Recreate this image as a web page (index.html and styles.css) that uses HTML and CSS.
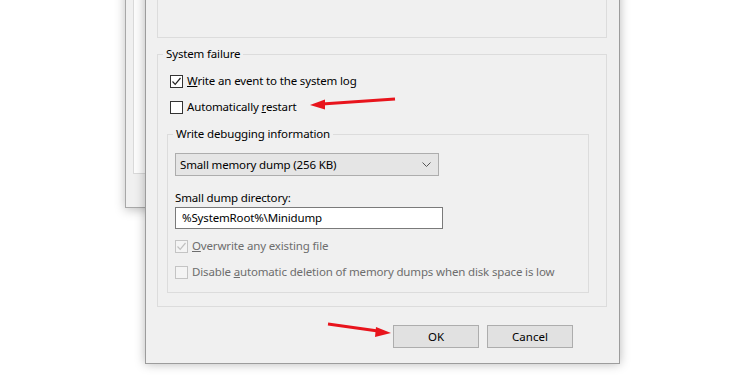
FILE: index.html
```html
<!DOCTYPE html>
<html lang="en">
<head>
    <meta charset="UTF-8">
    <meta name="viewport" content="width=device-width, initial-scale=1.0">
    <title>Startup and Recovery</title>
    <link rel="stylesheet" href="styles.css">
</head>
<body>

<div class="desktop">

    <!-- window behind the dialog -->
    <div class="back-window">
        <div class="back-panel"></div>
    </div>

    <div class="dialog">
        <fieldset class="group top-group"></fieldset>

        <fieldset class="group">
            <legend>System failure</legend>
            <div class="failure-body">
                <label class="check-row">
                    <span class="box"><svg viewBox="0 0 11 11"><polyline points="1.5,5.5 4.2,8.3 9.5,2"/></svg></span>
                    <span><u>W</u>rite an event to the system log</span>
                </label>
                <label class="check-row">
                    <span class="box"></span>
                    <span>Automatically <u>r</u>estart</span>
                </label>

                <fieldset class="group debug">
                    <legend>Write debugging information</legend>
                    <div class="debug-body">
                        <div class="select">
                            <span>Small memory dump (256 KB)</span>
                            <svg class="chevron" viewBox="0 0 9 5"><polyline points="0.5,0.5 4.5,4.5 8.5,0.5"/></svg>
                        </div>
                        <div class="field-label">Small dump directory:</div>
                        <div class="textbox">%SystemRoot%\Minidump</div>
                        <label class="check-row disabled">
                            <span class="box"><svg viewBox="0 0 11 11"><polyline points="1.5,5.5 4.2,8.3 9.5,2"/></svg></span>
                            <span><u>O</u>verwrite any existing file</span>
                        </label>
                        <label class="check-row disabled">
                            <span class="box"></span>
                            <span>Disable <u>a</u>utomatic deletion of memory dumps when disk space is low</span>
                        </label>
                    </div>
                </fieldset>
            </div>
        </fieldset>

        <div class="buttons">
            <button class="btn">OK</button>
            <button class="btn">Cancel</button>
        </div>
    </div>

    <!-- red annotation arrows -->
    <svg class="annotations" viewBox="0 0 750 375">
        <line x1="395" y1="99" x2="322" y2="104"/>
        <polygon points="310,105 325,99.5 325,109.5"/>
        <line x1="328" y1="324" x2="378" y2="331"/>
        <polygon points="391,333 376,327 375,337"/>
    </svg>

</div>

</body>
</html>
```

FILE: styles.css
```css
body { margin: 0; background: #fff; font-family: "Noto Sans", "Open Sans", sans-serif; font-size: 11.5px; letter-spacing: -0.15px; color: #000; overflow: hidden; }
.desktop { position: relative; width: 750px; height: 375px; overflow: hidden; }

.back-window { position: absolute; left: 125px; top: -20px; width: 120px; height: 228px; box-sizing: border-box; background: #f0f0f0; border: 1px solid #a8a8a8; box-shadow: 0 2px 10px rgba(0, 0, 0, 0.25); }
.back-panel { margin-left: 7px; height: 191px; background: #fcfcfc; border: 1px solid #d9d9d9; }

.dialog { position: absolute; left: 145px; top: -40px; width: 475px; height: 404px; box-sizing: border-box; padding: 0 12px 0 11px; background: #f0f0f0; border: 1px solid #9c9c9c; box-shadow: 0 0 10px rgba(0, 0, 0, 0.28); }

.group { margin: 0; padding: 0; border: 1px solid #dcdcdc; min-width: 0; }
.group legend { margin-left: 5px; padding: 0 3px; line-height: 16px; }
.top-group { box-sizing: border-box; height: 77px; margin-bottom: 8px; }

.failure-body { padding: 11px 17px 13px 9px; }
.check-row { display: flex; align-items: center; gap: 4px; height: 16px; line-height: 16px; margin-left: 3px; margin-bottom: 10px; white-space: nowrap; }
.check-row .box { width: 11px; height: 11px; border: 1px solid #333; background: #fff; display: flex; }
.check-row .box svg { width: 11px; height: 11px; fill: none; stroke: #222; stroke-width: 1.2; }
.check-row.disabled { color: #6d6d6d; margin-left: 0; }
.check-row.disabled .box { border-color: #c4c4c4; background: #f4f4f4; }
.check-row.disabled .box svg { stroke: #c0c0c0; }

.debug { margin-top: 11px; }
.debug-body { padding: 11px 0 2px 7px; }
.select { display: flex; align-items: center; justify-content: space-between; box-sizing: border-box; width: 264px; height: 23px; padding: 0 7px 0 4px; background: #e5e5e5; border: 1px solid #adadad; }
.chevron { width: 9px; height: 5px; fill: none; stroke: #555; stroke-width: 1; }
.field-label { margin-top: 14px; line-height: 16px; }
.textbox { box-sizing: border-box; width: 268px; height: 22px; margin-top: 1px; margin-bottom: 9px; padding: 0 6px; line-height: 20px; background: #fff; border: 1px solid #7a7a7a; }

.buttons { display: flex; justify-content: flex-end; gap: 8px; margin-top: 18px; margin-right: 34px; }
.btn { width: 86px; height: 23px; padding: 0; font: inherit; color: #000; background: #e1e1e1; border: 1px solid #adadad; }

.annotations { position: absolute; left: 0; top: 0; width: 750px; height: 375px; pointer-events: none; }
.annotations line { stroke: #e8141c; stroke-width: 3; }
.annotations polygon { fill: #e8141c; }
```
